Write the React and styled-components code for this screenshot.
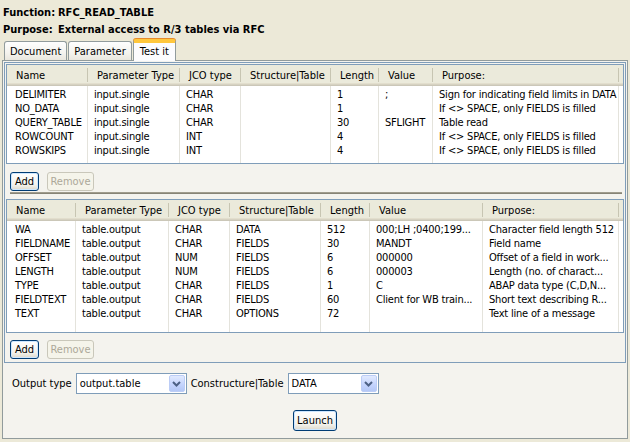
import styled, { createGlobalStyle } from "styled-components";

const GlobalStyle = createGlobalStyle`
  html, body {
    margin: 0;
    padding: 0;
    background: #ece9d8;
  }
  body {
    font-family: "DejaVu Sans Condensed", "Liberation Sans", sans-serif;
    font-size: 11px;
    color: #000;
  }
`;

const upperCols = "81px 92px 61px 90px 48px 54px 186px 4px";
const lowerCols = "69px 93px 61px 91px 49px 113px 136px 4px";

const headers = [
  "Name",
  "Parameter Type",
  "JCO type",
  "Structure|Table",
  "Length",
  "Value",
  "Purpose:",
];

const inputs = [
  ["DELIMITER", "input.single", "CHAR", "", "1", ";", "Sign for indicating field limits in DATA"],
  ["NO_DATA", "input.single", "CHAR", "", "1", "", "If <> SPACE, only FIELDS is filled"],
  ["QUERY_TABLE", "input.single", "CHAR", "", "30", "SFLIGHT", "Table read"],
  ["ROWCOUNT", "input.single", "INT", "", "4", "", "If <> SPACE, only FIELDS is filled"],
  ["ROWSKIPS", "input.single", "INT", "", "4", "", "If <> SPACE, only FIELDS is filled"],
];

const outputs = [
  ["WA", "table.output", "CHAR", "DATA", "512", "000;LH ;0400;199...", "Character field length 512"],
  ["FIELDNAME", "table.output", "CHAR", "FIELDS", "30", "MANDT", "Field name"],
  ["OFFSET", "table.output", "NUM", "FIELDS", "6", "000000", "Offset of a field in work..."],
  ["LENGTH", "table.output", "NUM", "FIELDS", "6", "000003", "Length (no. of charact..."],
  ["TYPE", "table.output", "CHAR", "FIELDS", "1", "C", "ABAP data type (C,D,N..."],
  ["FIELDTEXT", "table.output", "CHAR", "FIELDS", "60", "Client for WB train...", "Short text describing R..."],
  ["TEXT", "table.output", "CHAR", "OPTIONS", "72", "", "Text line of a message"],
];

const ParamTable = ({ cols, rows, height }) => (
  <Table $height={height}>
    <HeaderRow $cols={cols}>
      {headers.map((h) => (
        <HeaderCell key={h}>{h}</HeaderCell>
      ))}
      <Filler />
    </HeaderRow>
    {[...rows, ["", "", "", "", "", "", ""]].map((r, i) => (
      <Row key={i} $cols={cols}>
        {r.map((c, j) => (
          <Cell key={j} $first={j === 0}>
            {c}
          </Cell>
        ))}
        <Filler />
      </Row>
    ))}
  </Table>
);

const Combo = ({ value, width }) => (
  <ComboBox $w={width}>
    <span>{value}</span>
    <DropButton>
      <svg width="9" height="6" viewBox="0 0 9 6">
        <path d="M1 1 L4.5 4.5 L8 1" fill="none" stroke="#4d6185" strokeWidth="2" />
      </svg>
    </DropButton>
  </ComboBox>
);

const App = () => {
  return (
    <Window>
      <GlobalStyle />
      <Info>
        <b>Function:</b>
        <b>RFC_READ_TABLE</b>
      </Info>
      <Info>
        <b>Purpose:</b>
        <b>External access to R/3 tables via RFC</b>
      </Info>
      <TabStrip>
        <Tab>Document</Tab>
        <Tab>Parameter</Tab>
        <Tab $active>Test it</Tab>
      </TabStrip>
      <Panel>
        <SashFrame>
          <Pane>
            <ParamTable cols={upperCols} rows={inputs} height={100} />
            <ButtonRow $top={8}>
              <Button $w={29} $focus>Add</Button>
              <Button $w={47} disabled>
                Remove
              </Button>
            </ButtonRow>
          </Pane>
          <Sash />
          <Pane $bottom={2}>
            <ParamTable cols={lowerCols} rows={outputs} height={134} />
            <ButtonRow $top={7}>
              <Button $w={29} $focus>Add</Button>
              <Button $w={47} disabled>
                Remove
              </Button>
            </ButtonRow>
          </Pane>
        </SashFrame>
        <OptionsRow>
          <span>Output type</span>
          <Combo value="output.table" width={111} />
          <span>Constructure|Table</span>
          <Combo value="DATA" width={91} />
        </OptionsRow>
        <LaunchRow>
          <Button $w={44} $h={21} $focus>
            Launch
          </Button>
        </LaunchRow>
      </Panel>
    </Window>
  );
};

const Window = styled.div`
  width: 630px;
  height: 442px;
  overflow: hidden;
  box-sizing: border-box;
  padding: 4px 2px 0 2px;
  display: flex;
  flex-direction: column;
`;

const Info = styled.div`
  display: flex;
  height: 17px;
  line-height: 17px;
  padding-left: 1px;
  white-space: nowrap;
  b:first-child {
    width: 55px;
  }
`;

const TabStrip = styled.div`
  display: flex;
  align-items: flex-end;
  height: 22px;
  padding-left: 2px;
`;

const Tab = styled.div`
  position: relative;
  box-sizing: border-box;
  height: ${(p) => (p.$active ? "22px" : "19px")};
  margin-bottom: ${(p) => (p.$active ? "-1px" : "0")};
  margin-right: ${(p) => (p.$active ? "0" : "1px")};
  padding: ${(p) => (p.$active ? "1px 6px 0" : "0 5px")};
  line-height: ${(p) => (p.$active ? "17px" : "19px")};
  border: 1px solid #919b9c;
  border-bottom: none;
  border-radius: 3px 3px 0 0;
  background: ${(p) =>
    p.$active ? "#fcfcfe" : "linear-gradient(#fefefe, #f4f3ee 60%, #e9e7de)"};
  z-index: ${(p) => (p.$active ? 2 : 0)};
  ${(p) =>
    p.$active &&
    `
    border-top: 3px solid #ffc73c;
    box-shadow: inset 0 1px 0 #ffc73c, 0 -1px 0 #e68b2c;
  `}
`;

const Panel = styled.div`
  box-sizing: border-box;
  height: 379px;
  border: 1px solid #919b9c;
  padding: 1px;
  background: #f4f3ee;
  position: relative;
  z-index: 1;
`;

const SashFrame = styled.div`
  border: 1px solid #7f9db9;
  padding: 1px;
  display: flex;
  flex-direction: column;
`;

const Pane = styled.div`
  display: flex;
  flex-direction: column;
  padding-bottom: ${(p) => p.$bottom || 0}px;
`;

const Sash = styled.div`
  height: 8px;
  margin: 0 2px 0 4px;
  background: linear-gradient(
    #f4f3ee 0,
    #f4f3ee 1px,
    #aca899 1px,
    #7a786b 3px,
    #f4f3ee 3px
  );
`;

const Table = styled.div`
  box-sizing: border-box;
  height: ${(p) => p.$height}px;
  border: 1px solid #7f9db9;
  background: #fff;
  overflow: hidden;
`;

const HeaderRow = styled.div`
  display: grid;
  grid-template-columns: ${(p) => p.$cols};
  height: 21px;
  background: #ebeadb;
  box-shadow: inset 0 -1px #cbc7b8, inset 0 -2px #d6d2c2, inset 0 -3px #e2decd;
`;

const HeaderCell = styled.div`
  position: relative;
  padding: 2px 0 0 9px;
  line-height: 18px;
  white-space: nowrap;
  overflow: hidden;
  &::after {
    content: "";
    position: absolute;
    right: 0;
    top: 3px;
    bottom: 4px;
    width: 1px;
    background: #c7c5b2;
    box-shadow: 1px 0 #fff;
  }
`;

const Row = styled.div`
  display: grid;
  grid-template-columns: ${(p) => p.$cols};
  height: 14px;
  line-height: 17px;
`;

const Cell = styled.div`
  box-sizing: border-box;
  border-right: 1px solid #e4e3dc;
  padding-left: ${(p) => (p.$first ? 8 : 6)}px;
  letter-spacing: -0.2px;
  white-space: nowrap;
  overflow-x: clip;
`;

const Filler = styled.div``;

const ButtonRow = styled.div`
  display: flex;
  gap: 8px;
  padding: ${(p) => p.$top}px 0 0 4px;
`;

const Button = styled.button`
  box-sizing: border-box;
  width: ${(p) => p.$w}px;
  height: ${(p) => p.$h || 19}px;
  padding: 0;
  font: inherit;
  color: #000;
  border: 1px solid #003c74;
  border-radius: 3px;
  background: linear-gradient(#ffffff, #f3f2ec 70%, #dcd8cc);
  box-shadow: ${(p) => (p.$focus ? "inset 0 0 0 1px #cee7ff" : "none")};
  &:disabled {
    color: #aca899;
    border-color: #c9c7ba;
    background: #f5f4ea;
    box-shadow: none;
  }
`;

const OptionsRow = styled.div`
  display: flex;
  align-items: center;
  gap: 4px;
  margin-top: 10px;
  padding-left: 8px;
  white-space: nowrap;
`;

const ComboBox = styled.div`
  box-sizing: border-box;
  display: flex;
  align-items: center;
  justify-content: space-between;
  width: ${(p) => p.$w}px;
  height: 21px;
  border: 1px solid #7f9db9;
  background: #fff;
  padding: 1px 1px 1px 3px;
`;

const DropButton = styled.div`
  box-sizing: border-box;
  display: flex;
  align-items: center;
  justify-content: center;
  width: 16px;
  height: 17px;
  border: 1px solid #bccdf6;
  border-radius: 2px;
  background: linear-gradient(#e1eafe, #c3d3fd 60%, #b4c8f6);
`;

const LaunchRow = styled.div`
  display: flex;
  justify-content: center;
  margin-top: 16px;
`;

export default App;
